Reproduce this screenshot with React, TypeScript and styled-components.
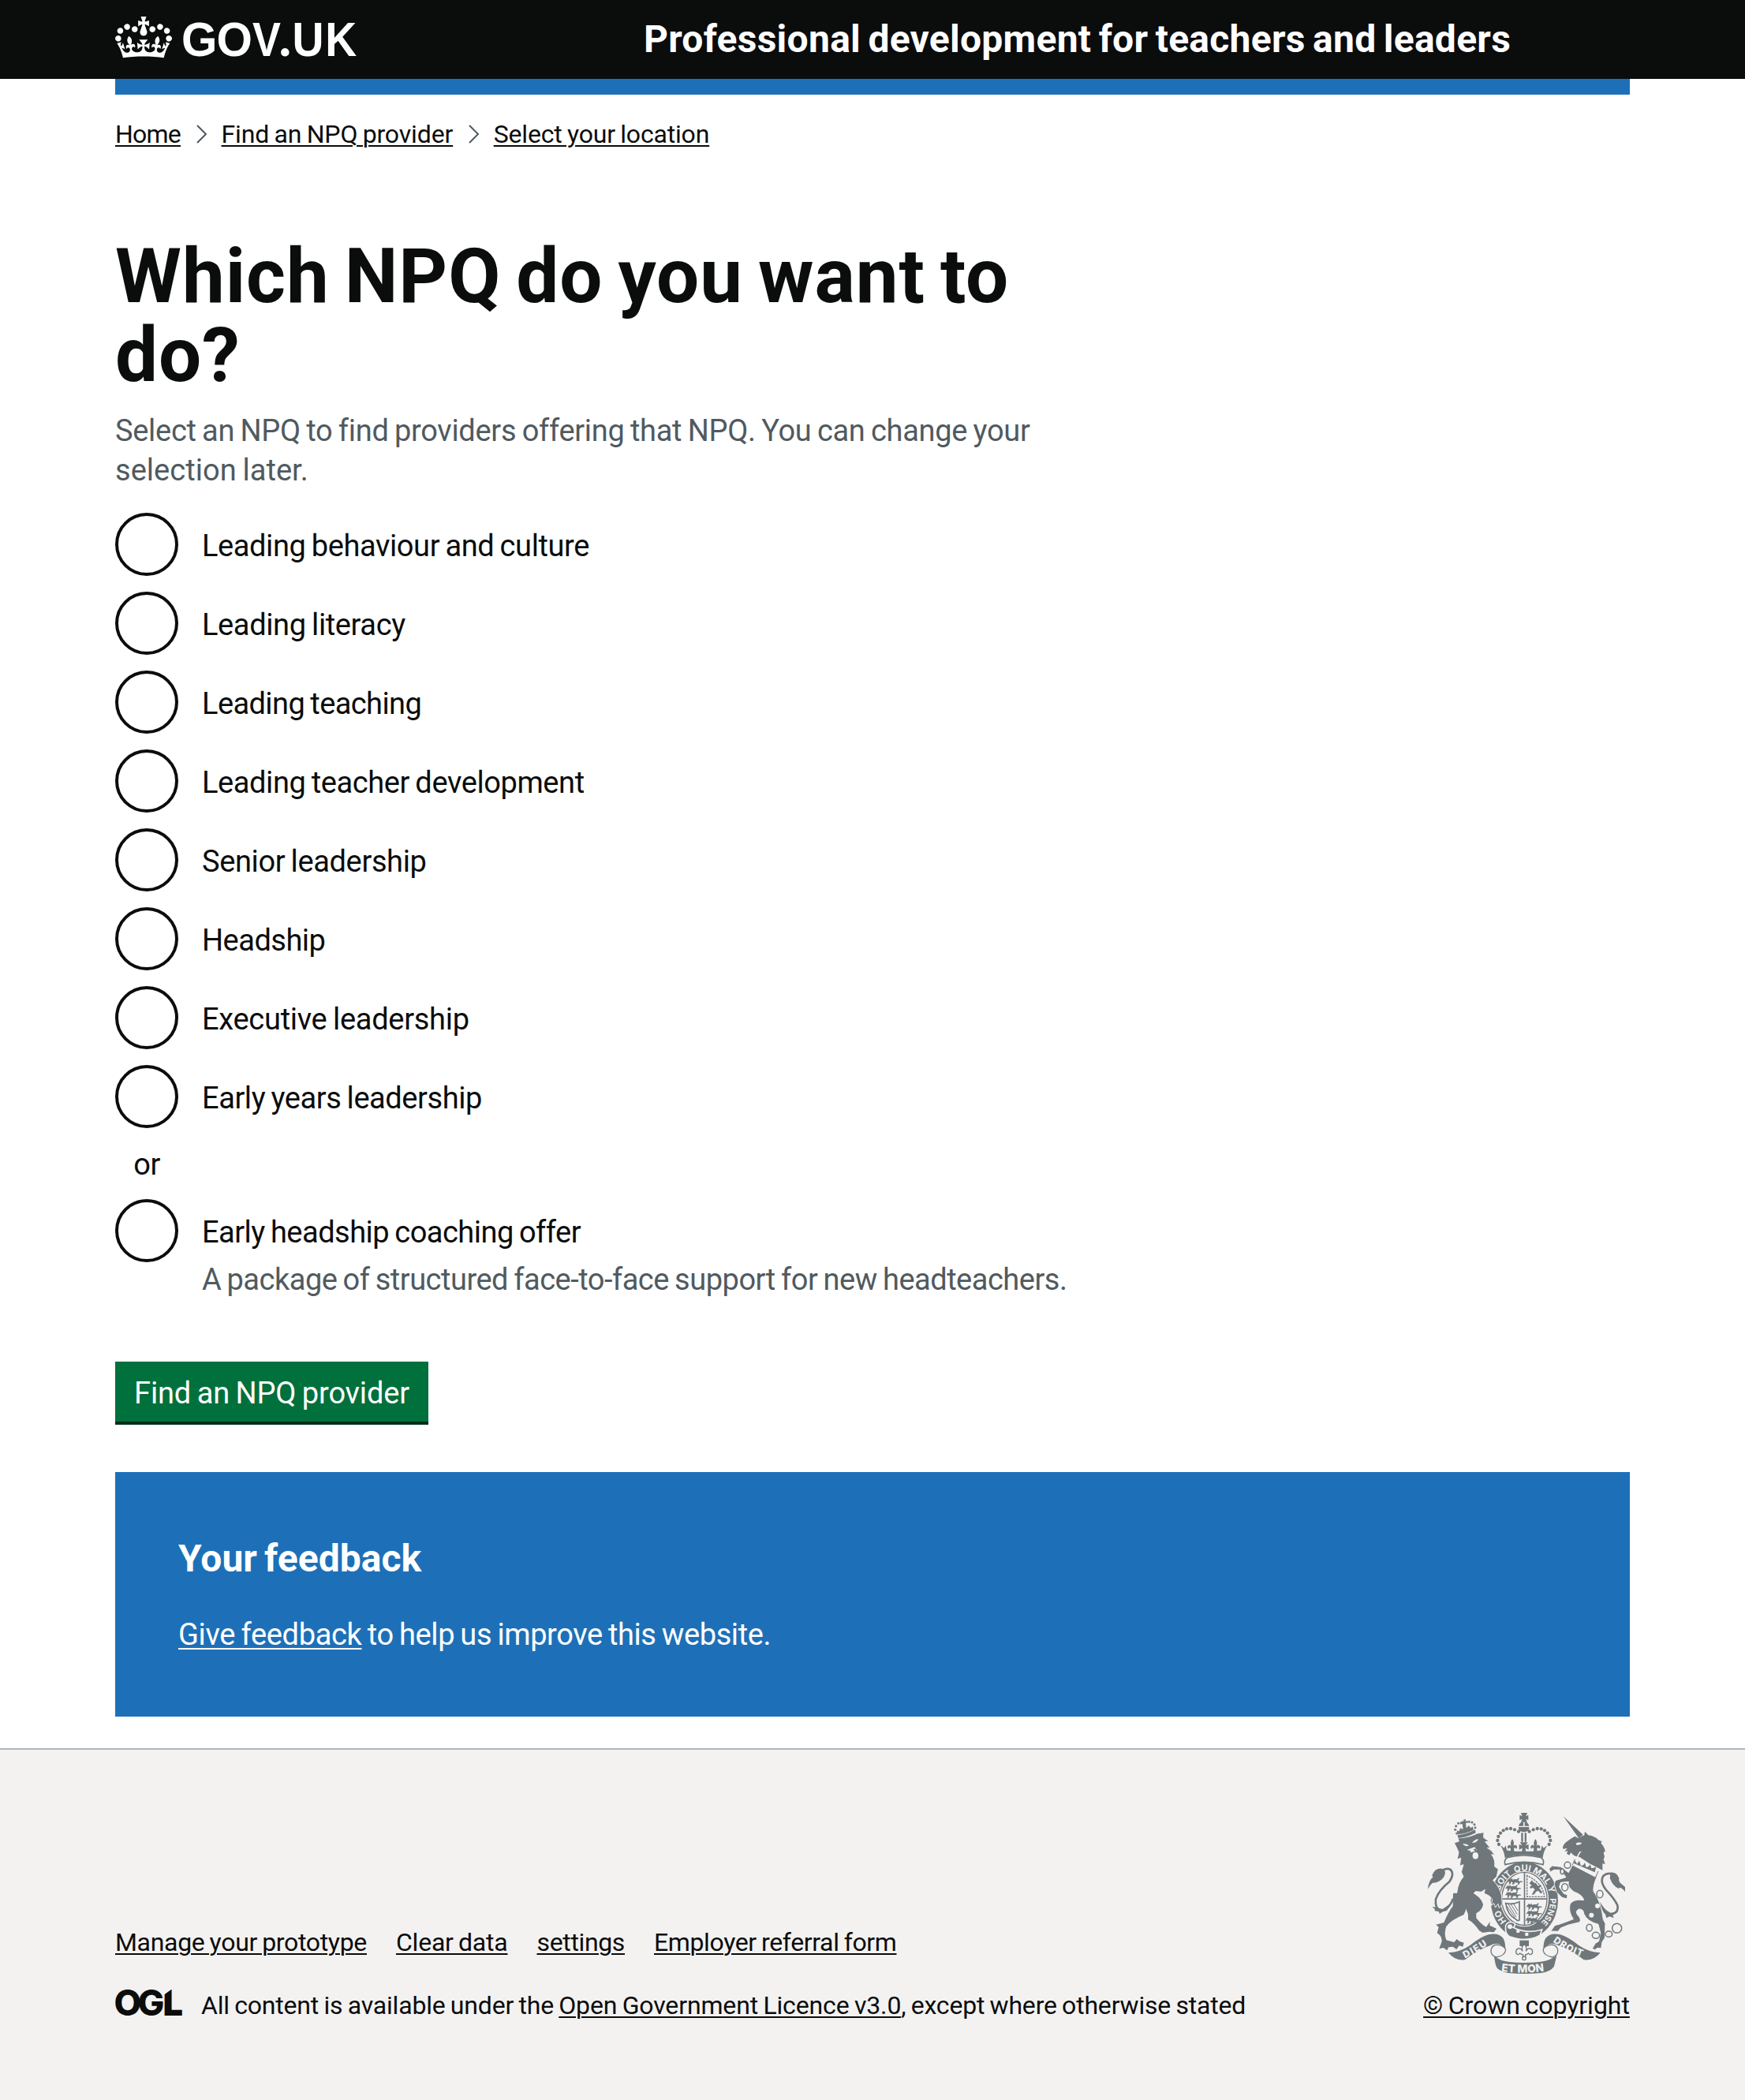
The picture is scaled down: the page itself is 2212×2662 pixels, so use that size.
import React from "react";
import styled, { createGlobalStyle, css } from "styled-components";

const INK = "#0b0c0c";
const BLUE = "#1d70b8";
const GREY = "#505a5f";
const CANVAS = "#f3f2f1";
const CREST = "#6f777b";

const GlobalStyle = createGlobalStyle`
  *, *::before, *::after { box-sizing: border-box; }
  body {
    margin: 0;
    background: ${CANVAS};
    color: ${INK};
    font-family: Roboto, "Liberation Sans", sans-serif;
    font-size: 38px;
    line-height: 50px;
  }
  h1, h2, p, ul, ol { margin: 0; padding: 0; }
  ul, ol { list-style: none; }
`;

type Tracked = { $track?: number };
const tracking = css<Tracked>`
  letter-spacing: ${({ $track = -0.009 }) => $track}em;
  word-spacing: -0.045em;
`;

const Page = styled.div`
  display: flex;
  flex-direction: column;
  min-height: 2662px;
  background: #fff;
`;

const Container = styled.div`
  width: 1920px;
  margin: 0 auto;
`;

const HeaderBar = styled.header`
  height: 100px;
  background: ${INK};
`;

const HeaderRow = styled(Container)`
  display: grid;
  grid-template-columns: 670px 1fr;
  height: 100px;
  color: #fff;
`;

const LogoLink = styled.a`
  display: block;
  padding-top: 21px;
  color: #fff;
  svg { display: block; overflow: visible; }
`;

const ServiceName = styled.a<Tracked>`
  padding-top: 20px;
  font-size: 48px;
  font-weight: 700;
  line-height: 60px;
  white-space: nowrap;
  ${tracking}
  word-spacing: -0.06em;
`;

const BlueStripe = styled(Container)`
  height: 20px;
  background: ${BLUE};
`;

const Breadcrumbs = styled.ol`
  display: flex;
  align-items: center;
  height: 40px;
  margin-top: 30px;
  font-size: 32px;
  line-height: 40px;
`;

const Crumb = styled.li`
  display: flex;
  align-items: center;
`;

const Chevron = styled.svg`
  display: block;
  flex: none;
  margin: 0 18px 0 19.5px;
`;

const TextLink = styled.a<Tracked & { $offset?: number }>`
  color: inherit;
  white-space: nowrap;
  text-decoration: underline;
  text-decoration-thickness: 2px;
  text-underline-offset: ${({ $offset = 3 }) => $offset}px;
  ${tracking}
`;

const Main = styled.main`
  padding-top: 110px;
`;

const Heading = styled.h1<Tracked>`
  width: 1260px;
  margin-bottom: 20px;
  font-size: 96px;
  font-weight: 700;
  line-height: 100px;
  ${tracking}
  word-spacing: -0.06em;
`;

const Hint = styled.p`
  width: 1260px;
  padding-top: 1px;
  color: ${GREY};
`;

const HintLine = styled.span<Tracked>`
  display: block;
  ${tracking}
`;

const RadioList = styled.div`
  display: flex;
  flex-direction: column;
  gap: 20px;
  margin-top: 29px;
`;

const RadioRow = styled.label`
  display: grid;
  grid-template-columns: 80px 1fr;
  column-gap: 30px;
`;

const RadioCircle = styled.span`
  width: 80px;
  height: 80px;
  border: 4px solid ${INK};
  border-radius: 50%;
  background: #fff;
`;

const RadioText = styled.span<Tracked>`
  padding-top: 17px;
  white-space: nowrap;
  ${tracking}
`;

const RadioHint = styled.span<Tracked>`
  grid-column: 2;
  height: 46px;
  margin-top: -3px;
  color: ${GREY};
  white-space: nowrap;
  ${tracking}
`;

const Divider = styled.div`
  width: 80px;
  height: 50px;
  padding-top: 1px;
  text-align: center;
  letter-spacing: -0.012em;
`;

const SubmitButton = styled.button<Tracked>`
  display: block;
  width: 397px;
  height: 76px;
  margin-top: 83px;
  padding: 4px 0 0;
  border: 0;
  background: #00703c;
  box-shadow: 0 4px 0 #002d18;
  color: #fff;
  font: 400 38px/50px Roboto, "Liberation Sans", sans-serif;
  ${tracking}
`;

const Feedback = styled.section`
  margin: 64px 0 40px;
  padding: 80px;
  background: ${BLUE};
  color: #fff;
`;

const FeedbackTitle = styled.h2`
  margin-bottom: 41px;
  font-size: 48px;
  font-weight: 700;
  line-height: 60px;
  letter-spacing: 0.001em;
  word-spacing: -0.06em;
`;

const FeedbackText = styled.p<Tracked>`
  height: 49px;
  ${tracking}
`;

const Footer = styled.footer`
  flex: 1;
  border-top: 2px solid #b1b4b6;
  background: ${CANVAS};
  font-size: 32px;
  line-height: 40px;
`;

const FooterRow = styled(Container)`
  display: flex;
  justify-content: space-between;
  align-items: flex-end;
  padding-top: 80px;
`;

const FooterLinks = styled.ul`
  display: flex;
  gap: 37px;
  margin-bottom: 40px;
`;

const Licence = styled.div`
  display: flex;
  align-items: flex-start;
  gap: 27px;
  svg { display: block; flex: none; overflow: visible; }
`;

const LicenceText = styled.span<Tracked>`
  white-space: pre;
  ${tracking}
`;

const Copyright = styled.div`
  display: flex;
  flex-direction: column;
  align-items: center;
  gap: 20px;
  width: 262px;
  svg { display: block; overflow: visible; }
`;

const GovUkLogo = () => (
  <svg width="306" height="54" viewBox="0 0 306 54" role="img" aria-label="GOV.UK">
    <g transform="scale(0.5455)" fill="currentColor">
      <path d="M25 30.2c3.5 1.5 7.7-.2 9.1-3.7 1.5-3.6-.2-7.8-3.9-9.2-3.6-1.4-7.6.3-9.1 3.9-1.4 3.5.3 7.5 3.9 9zM9 39.5c3.6 1.5 7.8-.2 9.2-3.7 1.5-3.6-.2-7.8-3.9-9.1-3.6-1.5-7.6.2-9.1 3.8-1.4 3.5.3 7.5 3.8 9zM4.4 57.2c3.5 1.5 7.7-.2 9.1-3.8 1.5-3.6-.2-7.7-3.9-9.1-3.5-1.5-7.6.3-9.1 3.8-1.4 3.5.3 7.6 3.9 9.1zm38.3-21.4c3.5 1.5 7.7-.2 9.1-3.8 1.5-3.6-.2-7.7-3.9-9.1-3.6-1.5-7.6.3-9.1 3.8-1.3 3.6.4 7.7 3.9 9.1zm64.4-5.6c-3.6 1.5-7.8-.2-9.1-3.7-1.5-3.6.2-7.8 3.8-9.2 3.6-1.4 7.7.3 9.2 3.9 1.3 3.5-.4 7.5-3.9 9zm15.9 9.3c-3.6 1.5-7.7-.2-9.1-3.7-1.5-3.6.2-7.8 3.7-9.1 3.6-1.5 7.7.2 9.2 3.8 1.5 3.5-.3 7.5-3.8 9zm4.7 17.7c-3.6 1.5-7.8-.2-9.2-3.8-1.5-3.6.2-7.7 3.9-9.1 3.6-1.5 7.7.3 9.2 3.8 1.3 3.5-.4 7.6-3.9 9.1zM89.3 35.8c-3.6 1.5-7.8-.2-9.2-3.8-1.4-3.6.2-7.7 3.9-9.1 3.6-1.5 7.7.3 9.2 3.8 1.4 3.6-.3 7.7-3.9 9.1zM69.7 17.7l8.9 4.7V9.3l-8.9 2.8c-.2-.3-.5-.6-.9-.9L72.4 0H59.6l3.5 11.2c-.3.3-.6.5-.9.9l-8.8-2.8v13.1l8.8-4.7c.3.3.6.7.9.9l-5 15.4v.1c-.2.8-.4 1.6-.4 2.4 0 4.1 3.1 7.5 7 8.1h.2c.3 0 .7.1 1 .1.4 0 .7 0 1-.1h.2c4-.6 7.1-4.1 7.1-8.1 0-.8-.1-1.7-.4-2.4V34l-5.1-15.4c.4-.2.7-.6 1-.9zM66 92.8c16.9 0 32.8 1.1 47.1 3.2 4-16.9 8.9-26.7 14-33.5l-9.6-3.4c1 4.9 1.1 7.2 0 10.2-1.5-1.4-3-4.3-4.2-8.7L108.6 76c2.8-2 5-3.2 7.5-3.3-4.4 9.4-10 11.9-13.6 11.2-4.3-.8-6.3-4.6-5.6-7.9 1-4.7 5.7-5.9 8-.5 4.3-8.7-3-11.4-7.6-8.8 7.1-7.2 7.9-13.5 2.1-21.1-8 6.1-8.1 12.3-4.5 20.8-4.7-5.4-12.1-2.5-9.5 6.2 3.4-5.2 7.9-2 7.2 3.1-.6 4.3-6.4 7.8-13.5 7.2-10.3-.9-10.9-8-11.2-13.8 2.5-.5 7.1 1.8 11 7.3L80.2 60c-4.1 4.4-8 5.3-12.3 5.4 1.4-4.4 8-11.6 8-11.6H55.5s6.4 7.2 7.9 11.6c-4.2-.1-8-1-12.3-5.4l1.4 16.4c3.9-5.5 8.5-7.7 10.9-7.3-.3 5.8-.9 12.8-11.1 13.8-7.2.6-12.9-2.9-13.5-7.2-.7-5 3.8-8.3 7.1-3.1 2.7-8.7-4.6-11.6-9.4-6.2 3.7-8.5 3.6-14.7-4.6-20.8-5.8 7.6-5 13.9 2.2 21.1-4.7-2.6-11.9.1-7.7 8.8 2.3-5.5 7.1-4.2 8.1.5.7 3.3-1.3 7.1-5.7 7.9-3.5.7-9-1.8-13.5-11.2 2.5.1 4.7 1.3 7.5 3.3l-4.7-15.4c-1.2 4.4-2.7 7.2-4.3 8.7-1.1-3-.9-5.3 0-10.2l-9.5 3.4c5 6.9 9.9 16.7 14 33.5 14.8-2.1 30.8-3.2 47.7-3.2z" />
    </g>
    <g fill="currentColor" fontFamily="'Liberation Sans', Arial, sans-serif" fontSize="60.5" fontWeight="700">
      <text transform="translate(84 50) scale(0.965 1)" letterSpacing="-1">GO</text>
      <text transform="translate(174 50) scale(0.89 1)">V</text>
      <text x="207.3" y="50" fontFamily="Lato, sans-serif" fontSize="68">.</text>
      <text transform="translate(224.5 50) scale(0.915 1)" letterSpacing="2">UK</text>
    </g>
  </svg>
);

const OglLogo = () => (
  <svg width="82" height="34" viewBox="0 0 82 34" role="img" aria-label="Open Government Licence">
    <text y="33" fill={INK} fontFamily="Inter, sans-serif" fontSize="45" fontWeight="800">
      <tspan x="-1.6">O</tspan>
      <tspan x="28.5">G</tspan>
      <tspan x="60.6" fontWeight="900">L</tspan>
    </text>
    <path d="M61 -1h11.5L62 6.5z" fill={CANVAS} />
  </svg>
);

const BEADS: [number, number][] = [
  [435, 155], [420, 148], [405, 144], [390, 145], [377, 151], [366, 161], [358, 174], [355, 189], [360, 204],
];

const LION_CROWN_BEADS: [number, number][] = [
  [137, 74], [134, 88], [140, 102], [146, 64], [157, 62], [187, 58], [198, 60], [207, 68], [210, 80],
];

const PassantLion = ({ x, y }: { x: number; y: number }) => (
  <path
    transform={`translate(${x} ${y})`}
    d="M0 6l6-7 5 4 5-5 2 6 9-2 8 1 6-6 3 3-5 7 6 3 8-1 4 5-7-1-5 3-1 6h-7l2-6-12-1-4 7h-7l3-7-6-3-3 9-8 1 4-5-3-6-7 2z"
  />
);

const Fleur = ({ x, y }: { x: number; y: number }) => (
  <path
    transform={`translate(${x} ${y})`}
    d="M0-24q10 12 4 26 8-8 13 0 4 8-3 11-3-8-8-1l2 14h-16l2-14q-5-7-8 1-7-3-3-11 5-8 13 0-6-14 4-26z"
  />
);

const RibbonHalf = () => (
  <g>
    <path d="M168 616Q212 614 250 588 290 556 320 547 360 538 377 562 386 580 385 610 372 582 352 581 336 582 328 588 280 604 232 642 196 650 168 616z" />
    <path d="M386 606Q382 628 350 633 328 626 330 604 336 584 356 586 384 590 386 606z" fill={CANVAS} stroke={CREST} strokeWidth="4" />
  </g>
);

const CrestArms = () => (
  <svg width="250" height="204" viewBox="90 84 750 612" fill={CREST} aria-hidden="true">
    <defs>
      <path id="garter" pathLength="360" d="M457 527A98 111 0 0 1 457 305A98 111 0 0 1 457 527" />
      <path id="dieu" d="M231 637Q286 610 340 570" />
      <path id="droit" d="M565 574Q620 616 704 639" />
      <path id="etmon" d="M369 686Q457 698 548 683" />
    </defs>

    {/* imperial crown */}
    <path d="M444 84h24l-5 13 9-5v20l-9-5 5 12h-24l5-12-10 5V92l10 5z" />
    <path d="M435 134q4-15 18-16v16zM458 118q13 1 17 16h-17zM435 138h40v8q-4 10-20 11-16-1-20-11z" />
    <path d="M445 160h7v34h-7zM458 160h7v34h-7z" />
    {BEADS.map(([x, y]) => (
      <g key={x}>
        <circle cx={x} cy={y} r="6.4" />
        <circle cx={911 - x} cy={y} r="6.4" />
      </g>
    ))}
    <path d="M440 196h30l-8 12 11-4v20l-12-6 2 16h-16l2-16-12 6v-20l11 4z" />
    <Fleur x={411} y={208} />
    <Fleur x={499} y={208} />
    <path d="M366 208l14 10 6-10 4 18q22 6 65 4 43 2 65-4l4-18 6 10 14-10q-14 22-17 47-72-22-144 0-3-25-17-47z" />

    {/* garter */}
    <ellipse cx="457" cy="417" rx="128" ry="146" />
    <path d="M392 254q63-16 128 0 14 8 8 27-72-20-144 0-6-19 8-27z" fill={CANVAS} stroke={CREST} strokeWidth="5" />
    <ellipse cx="457" cy="411" rx="92" ry="106" fill={CANVAS} />
    <ellipse cx="457" cy="411" rx="86" ry="101" fill="none" stroke={CREST} strokeWidth="4" />
    <path d="M455 310h5v202h-5zM371 409h172v5H371z" />
    <g fill={CANVAS} fontFamily="Inter, sans-serif" fontSize="33" fontWeight="700" textAnchor="middle">
      <text><textPath href="#garter" startOffset="56">HO</textPath></text>
      <text><textPath href="#garter" startOffset="131">SOIT</textPath></text>
      <text><textPath href="#garter" startOffset="176">QUI</textPath></text>
      <text><textPath href="#garter" startOffset="217">MAL</textPath></text>
      <text><textPath href="#garter" startOffset="249">Y</textPath></text>
      <text fontSize="31"><textPath href="#garter" startOffset="294">PENSE</textPath></text>
    </g>

    {/* quarterings */}
    <PassantLion x={394} y={334} />
    <PassantLion x={388} y={360} />
    <PassantLion x={388} y={385} />
    <PassantLion x={468} y={430} />
    <PassantLion x={468} y={456} />
    <PassantLion x={464} y={482} />
    <path d="M467 322v81h66q-4-50-66-81z" fill="none" stroke={CREST} strokeWidth="4" strokeDasharray="8 3" />
    <path d="M476 352l10-12 5 8 10 4 8 10 10-6 2 8-8 6 6 8 8 10-9 2-8-10-9 4-6 10-10 2 6-12 6-8-8-8-8 4-4-6 8-6z" />
    <path d="M386 428q26 6 52-6v70q-8 4-12-2-34-18-40-62z" fill="none" stroke={CREST} strokeWidth="5" />
    <path d="M396 432l30 48M406 432l24 38M416 430l16 26M390 438l32 46" fill="none" stroke={CREST} strokeWidth="3" />

    {/* strap and buckle */}
    <path d="M386 512q10-20 34-8 4 10-6 16 54 26 110 8l-8 22q-48 28-116 4-18-10-14-42z" stroke={CANVAS} strokeWidth="5" />
    <path d="M484 522q14-2 26-14l6 12q-14 10-26 10z" />
    <g fill={CANVAS}>
      <circle cx="402" cy="517" r="9" />
      <circle cx="433" cy="534" r="7" />
      <circle cx="466" cy="546" r="7" />
    </g>

    {/* lion */}
    <g transform="translate(60 60)">
      <path
        d="M130 138l18-6-4-12q44-2 74-18l25-4-1 20 21 15-15 1 20 24-12-1q20 10 28 28l-12-3q16 22 12 46l14 10-6 28-14 14q28 30 33 62l2 30-12 14-4-16-10 14-6-16-10 8 4-24q-8-14-32-22l4-14-14 9-22-2-20 22q-34 0-52 36-10-24 2-58 4-34 24-56l-8-18 8-28-14 5 4-30-14 6 6-28-8-18z"
        stroke={CANVAS}
        strokeWidth="3"
      />
      <path d="M188 322q46 22 52 50-2 22-26 34l0 18q20 26 38 34l14-20-1 14 26 12-10 14-18-2-24 4-14-8q-20-30-42-42v-20q-12-32-22-62z" />
      <path d="M126 330q34-4 52 26 2 32-12 56-46 18-66 44-10 26 0 52l30 8 10-12 10 8 17 6-4 15-14-4-10 14-14-10-16 2-6 12-14-10-16 4 10-28q0-22-18-32l6-22-10-10q18-4 30-8 18-42 34-62z" />
      <path d="M126 350Q108 396 78 396 56 388 60 352 72 318 112 286 132 256 116 240 100 232 84 244" fill="none" stroke={CREST} strokeWidth="8" />
      <path d="M46 380l40 10 34-24-18 30-12 2-16 10-2-8-18-4 4-4z" />
      <path d="M30 314q2-32 20-46-10-4 8-26 20-12 36-2 6 22-12 38-20 14-34 12-10 8-18 24z" />
      <g fill={CANVAS}>
        <path d="M162 142q14-2 24 6-14 8-24-6zM198 138q10-14 24-14-4 14-24 14zM180 164l28-10 8 12-12 6-10 2z" />
        <ellipse cx="211" cy="187" rx="11" ry="13" />
      </g>
      <path d="M176 170l16-4-4 14zM202 163l12-3-2 12z" />
      <path d="M142 108q30 0 68-20l2 12q-34 18-66 20z" />
      <path d="M160 55l7 2-2-7 9-2-1 8 8-2 1 9-8-1 2 20 10-10 6 10 8-6 4 13q-34 16-60 16l-4-14 9 3 4-12 11 5-3-22-7 3z" />
      {LION_CROWN_BEADS.map(([x, y]) => (
        <circle key={x} cx={x} cy={y} r="4.6" />
      ))}
    </g>

    {/* unicorn */}
    <g transform="translate(435 60)">
      <path d="M170 37l75 70-16 14z" />
      <path d="M228 121q10-8 22-12l2-14 13 14q26 4 38 18l14 6-4 6q16 18 16 32l-6 4 4 16-4 10 6 18-10-2 0 26-14-8q-40-18-72-42-22-2-34-18l-6 10-10-6 4-10-12 2 10-12-16 2q-4-12 12-26 18-14 33-22z" />
      <path d="M218 140q10-6 22-2-4 10-20 8zM232 172q-8 10-14 28l8 4q-2-18 14-34z" fill={CANVAS} />
      <path
        d="M210 212Q245 238 300 262 282 300 285 322 302 345 312 378 318 400 322 430l8 15-2 55-10 15-4 25-14-2-10 7-10-5 12-20 13-8 6-32-8-32Q262 438 248 408q0-18-18-18-18 8-4 24 14 14 6 26l-42 10-30 12-10 13-28-1 16-22 22-6 48-18q-20-30-12-58 14-20 52-14-4-20-38-32-26-18-20-38l-30 3-5 17 17 25 14 5-2 15-19-5-20-20-10-30 5-15 40-12-20-28h-25l-15 8-4-13 12-11 32 4 30 22z"
        stroke={CANVAS}
        strokeWidth="3"
      />
      <path d="M212 197l94 47-12 26-92-48z" fill={CANVAS} />
      <path d="M210 216l4-12 8 14 9-12 6 20 10-4 5-9 5 18 10-3 5-9 5 16 9-2 9-4-5 21z" />
      <path d="M214 200l-9 22M303 246l-11 24" stroke={CREST} strokeWidth="3" />
      <g fill={CANVAS} stroke={CREST} strokeWidth="4.5">
        <ellipse cx="186" cy="223" rx="12" ry="12" />
        <ellipse cx="166" cy="247" rx="7" ry="10" />
        <ellipse cx="176" cy="307" rx="12" ry="14" />
        <ellipse cx="309" cy="333" rx="12" ry="14" />
        <ellipse cx="269" cy="461" rx="11" ry="13" />
        <ellipse cx="294" cy="490" rx="14" ry="12" />
        <ellipse cx="343" cy="485" rx="13" ry="11" />
        <circle cx="374" cy="463" r="18" />
      </g>
      <circle cx="300" cy="378" r="9" fill={CANVAS} />
      <circle cx="277" cy="413" r="9" fill={CANVAS} />
      <path d="M352 410Q382 404 376 376 366 352 332 316 308 286 322 264 340 246 366 262" fill="none" stroke={CREST} strokeWidth="8" />
      <path d="M350 250q24 0 32 22-2 12 6 20l17 14v18q-10-14-20-16l-4 4q-22-8-34-40z" />
      <path d="M310 362q16 32 40 42l30-4-22 12 4 12-16-6-12 6-4-14q-14-12-20-48z" />
    </g>

    {/* motto ribbon */}
    <RibbonHalf />
    <g transform="translate(914 0) scale(-1 1)"><RibbonHalf /></g>
    <path d="M341 628Q365 648 400 651 457 657 520 650 560 643 580 626L570 668Q556 688 520 693 457 699 395 693 354 686 348 664z" />
    <path d="M439 569h35v22h-35z" />
    <path
      d="M456 582q-12 12-6 28-6-12-16-10-12 4-8 18 8 10 14 0 4 4 12 6v8h9v-8q8-2 12-6 6 10 14 0 4-14-8-18-10-2-16 10 6-16-7-28z"
      fill={CANVAS}
      stroke={CREST}
      strokeWidth="4"
    />
    <circle cx="456" cy="637" r="7" fill={CANVAS} stroke={CREST} strokeWidth="4" />
    <g fill={CANVAS} fontFamily="Inter, sans-serif" fontSize="36" fontWeight="800">
      <text letterSpacing="5"><textPath href="#dieu">DIEU</textPath></text>
      <text letterSpacing="3"><textPath href="#droit">DROIT</textPath></text>
      <text fontSize="41"><textPath href="#etmon">ET MON</textPath></text>
    </g>
  </svg>
);

const CrumbArrow = () => (
  <Chevron width="14" height="24" viewBox="0 0 14 24" fill="none" stroke={GREY} strokeWidth="2">
    <path d="M1 1l11 11L1 23" />
  </Chevron>
);

const CRUMBS = [
  { text: "Home", track: -0.0243 },
  { text: "Find an NPQ provider", track: -0.0043 },
  { text: "Select your location", track: -0.0054 },
];

const OPTIONS = [
  { text: "Leading behaviour and culture", track: -0.0106 },
  { text: "Leading literacy", track: -0.0098 },
  { text: "Leading teaching", track: -0.0155 },
  { text: "Leading teacher development", track: -0.0106 },
  { text: "Senior leadership", track: -0.0098 },
  { text: "Headship", track: -0.0134 },
  { text: "Executive leadership", track: -0.0075 },
  { text: "Early years leadership", track: -0.0115 },
];

const FOOTER_LINKS = [
  { text: "Manage your prototype", track: -0.01 },
  { text: "Clear data", track: -0.0067 },
  { text: "settings", track: -0.0112 },
  { text: "Employer referral form", track: -0.0114 },
];

export default function App() {
  return (
    <Page>
      <GlobalStyle />
      <HeaderBar>
        <HeaderRow>
          <LogoLink><GovUkLogo /></LogoLink>
          <ServiceName $track={0.0056}>Professional development for teachers and leaders</ServiceName>
        </HeaderRow>
      </HeaderBar>
      <BlueStripe />
      <Container>
        <Breadcrumbs>
          {CRUMBS.map((c, i) => (
            <Crumb key={c.text}>
              {i > 0 && <CrumbArrow />}
              <TextLink $track={c.track}>{c.text}</TextLink>
            </Crumb>
          ))}
        </Breadcrumbs>
        <Main>
          <Heading $track={0.0098}>Which NPQ do you want to<br />do?</Heading>
          <Hint>
            <HintLine $track={-0.0078}>Select an NPQ to find providers offering that NPQ. You can change your</HintLine>
            <HintLine $track={0.001}>selection later.</HintLine>
          </Hint>
          <RadioList>
            {OPTIONS.map((o) => (
              <RadioRow key={o.text}>
                <RadioCircle />
                <RadioText $track={o.track}>{o.text}</RadioText>
              </RadioRow>
            ))}
            <Divider>or</Divider>
            <RadioRow>
              <RadioCircle />
              <RadioText $track={-0.0137}>Early headship coaching offer</RadioText>
              <RadioHint $track={-0.013}>A package of structured face-to-face support for new headteachers.</RadioHint>
            </RadioRow>
          </RadioList>
          <SubmitButton $track={-0.0042}>Find an NPQ provider</SubmitButton>
          <Feedback>
            <FeedbackTitle>Your feedback</FeedbackTitle>
            <FeedbackText $track={-0.0108}>
              <TextLink $track={-0.0087} $offset={4}>Give feedback</TextLink> to help us improve this website.
            </FeedbackText>
          </Feedback>
        </Main>
      </Container>
      <Footer>
        <FooterRow>
          <div>
            <FooterLinks>
              {FOOTER_LINKS.map((l) => (
                <li key={l.text}><TextLink $track={l.track}>{l.text}</TextLink></li>
              ))}
            </FooterLinks>
            <Licence>
              <OglLogo />
              <LicenceText $track={-0.0058}>
                {"All content is available under the "}
                <TextLink $track={-0.0044}>Open Government Licence v3.0</TextLink>
                <LicenceText $track={-0.0058}>, except where otherwise stated</LicenceText>
              </LicenceText>
            </Licence>
          </div>
          <Copyright>
            <CrestArms />
            <TextLink $track={-0.0005}>© Crown copyright</TextLink>
          </Copyright>
        </FooterRow>
      </Footer>
    </Page>
  );
}
